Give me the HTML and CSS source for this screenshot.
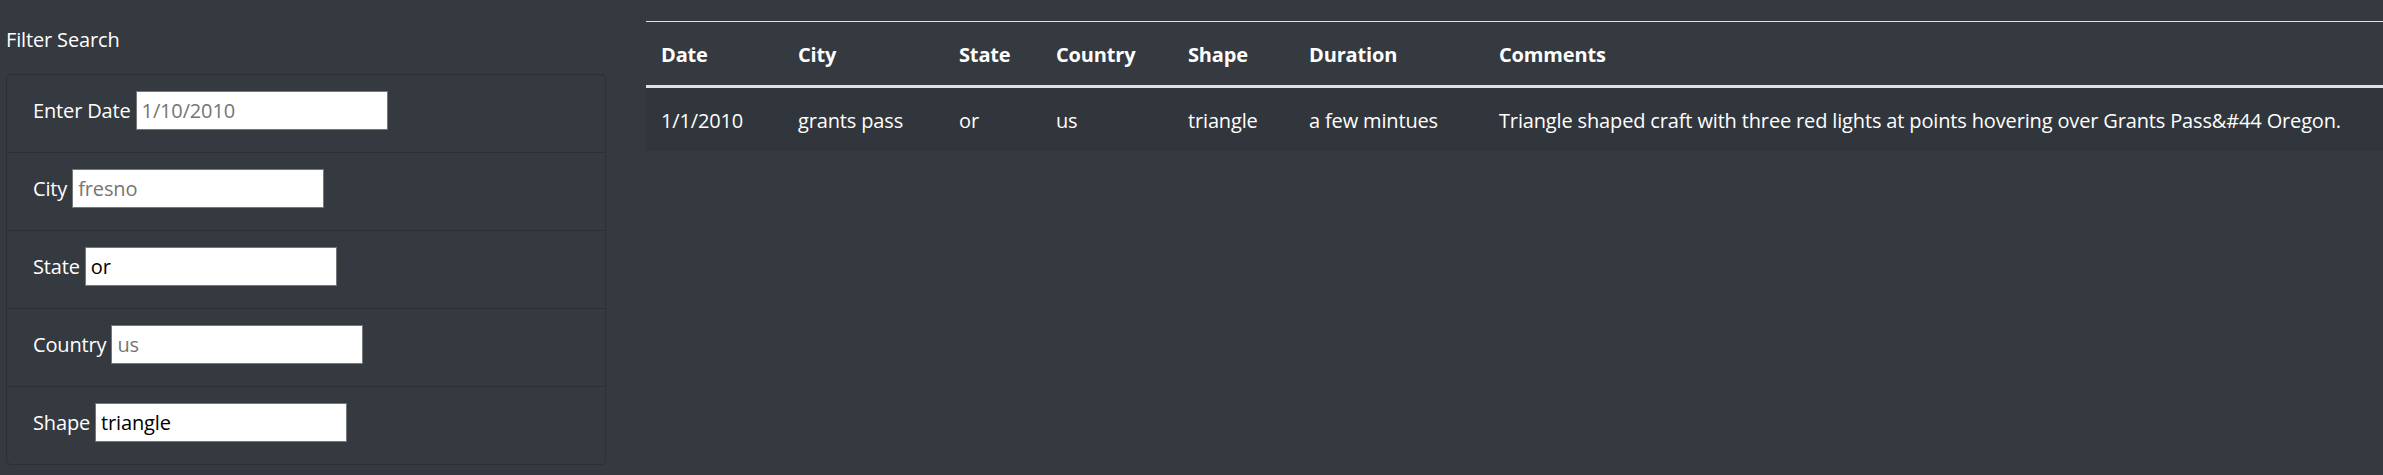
FILE: index.html
```html
<!DOCTYPE html>
<html lang="en">
<head>
<meta charset="utf-8">
<title>UFO Sightings</title>
<link rel="stylesheet" href="styles.css">
</head>
<body>
<div class="page">
  <aside class="filters">
    <div class="filter-title">Filter Search</div>
    <ul class="filter-list">
      <li class="filter-item"><label class="filter-label" for="datetime">Enter Date</label><input class="filter-input" id="datetime" type="text" placeholder="1/10/2010"></li>
      <li class="filter-item"><label class="filter-label" for="city">City</label><input class="filter-input" id="city" type="text" placeholder="fresno"></li>
      <li class="filter-item"><label class="filter-label" for="state">State</label><input class="filter-input" id="state" type="text" value="or"></li>
      <li class="filter-item"><label class="filter-label" for="country">Country</label><input class="filter-input" id="country" type="text" placeholder="us"></li>
      <li class="filter-item"><label class="filter-label" for="shape">Shape</label><input class="filter-input" id="shape" type="text" value="triangle"></li>
    </ul>
  </aside>
  <main class="results">
    <table class="ufo-table">
      <colgroup>
        <col class="col-date">
        <col class="col-city">
        <col class="col-state">
        <col class="col-country">
        <col class="col-shape">
        <col class="col-duration">
        <col class="col-comments">
      </colgroup>
      <thead>
        <tr>
          <th>Date</th>
          <th>City</th>
          <th>State</th>
          <th>Country</th>
          <th>Shape</th>
          <th>Duration</th>
          <th>Comments</th>
        </tr>
      </thead>
      <tbody>
        <tr class="striped">
          <td>1/1/2010</td>
          <td>grants pass</td>
          <td>or</td>
          <td>us</td>
          <td>triangle</td>
          <td>a few mintues</td>
          <td>Triangle shaped craft with three red lights at points hovering over Grants Pass&amp;#44 Oregon.</td>
        </tr>
      </tbody>
    </table>
  </main>
</div>
</body>
</html>
```

FILE: styles.css
```css
html, body {
  margin: 0;
  padding: 0;
  background: #343a40;
  color: #ffffff;
  font-family: "Open Sans", "Noto Sans", "Liberation Sans", sans-serif;
  font-size: 20px;
  line-height: 30px;
  letter-spacing: -0.15px;
}

.page {
  display: flex;
  align-items: flex-start;
  width: 100%;
  overflow: hidden;
}

.filters {
  flex: 0 0 600px;
  margin-left: 6px;
  padding-top: 25px;
}

.filter-title {
  line-height: 30px;
  margin-bottom: 19px;
}

.filter-list {
  list-style: none;
  margin: 0;
  padding: 0;
  border: 1px solid #2b3035;
  border-radius: 5px;
}

.filter-item {
  display: flex;
  align-items: baseline;
  gap: 5px;
  padding: 16px 25px 22px 26px;
  border-top: 1px solid #2b3035;
}

.filter-item:first-child {
  border-top: none;
}

.filter-label {
  line-height: 30px;
}

.filter-input {
  box-sizing: border-box;
  width: 252px;
  height: 39px;
  margin: 0;
  padding: 0 5px;
  border: 1px solid #767676;
  border-radius: 0;
  background: #ffffff;
  color: #000000;
  font-family: inherit;
  font-size: 20px;
  letter-spacing: -0.15px;
  outline: none;
}

.filter-input::placeholder {
  color: #757575;
  opacity: 1;
}

.results {
  flex: 1 1 auto;
  min-width: 0;
  margin-left: 40px;
  padding-top: 21px;
}

.ufo-table {
  width: 100%;
  border-collapse: collapse;
  table-layout: fixed;
  color: #ffffff;
}

.col-date { width: 137px; }
.col-city { width: 161px; }
.col-state { width: 97px; }
.col-country { width: 132px; }
.col-shape { width: 121px; }
.col-duration { width: 190px; }

.ufo-table th,
.ufo-table td {
  text-align: left;
  white-space: nowrap;
  padding: 18px 15px 15px 15px;
  line-height: 30px;
}

.ufo-table thead th {
  font-weight: 700;
  border-top: 1px solid #dee2e6;
  border-bottom: 3px solid #dee2e6;
  padding-top: 18px;
  padding-bottom: 15px;
}

.ufo-table tbody td {
  padding-top: 18px;
  padding-bottom: 15px;
}

.ufo-table .striped {
  background: #31363c;
}
```
